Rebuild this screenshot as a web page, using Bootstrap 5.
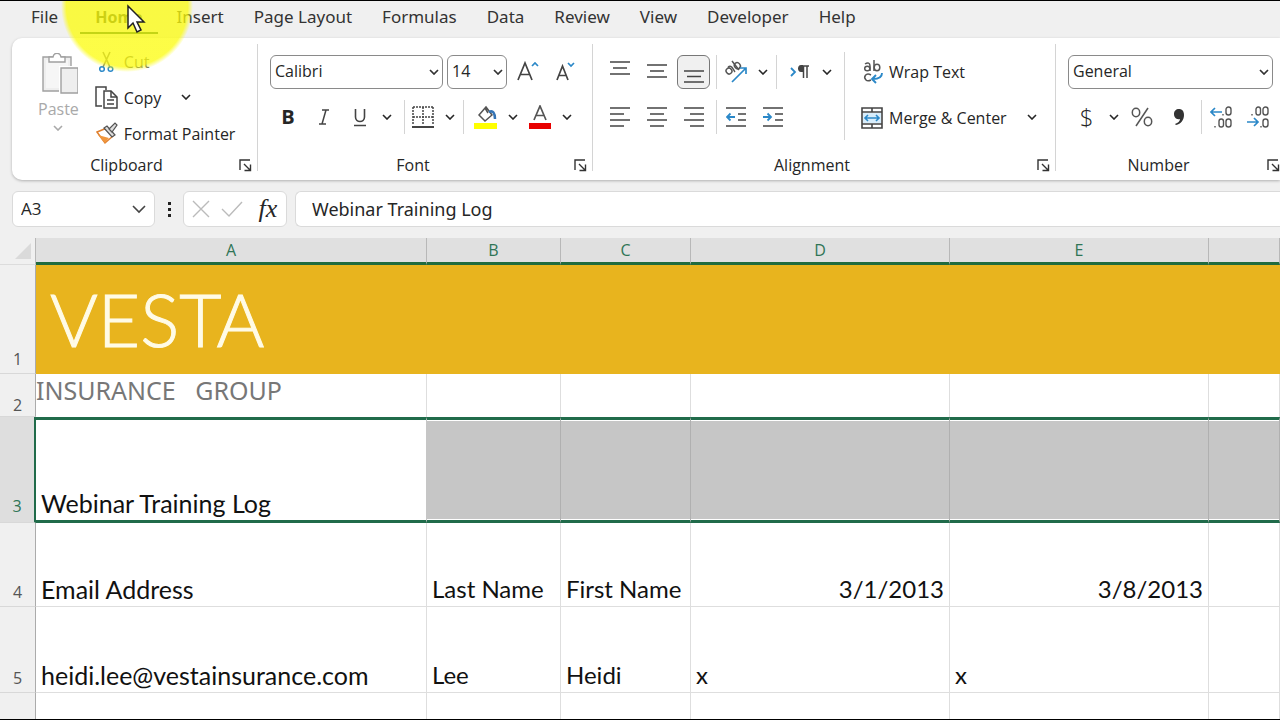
<!DOCTYPE html>
<html lang="en">
<head>
<meta charset="utf-8">
<meta name="viewport" content="width=device-width, initial-scale=1">
<title>Webinar Training Log</title>
<link rel="stylesheet" href="https://cdn.jsdelivr.net/npm/bootstrap@5.3.0/dist/css/bootstrap.min.css">
<style>
  body { background: #f0f0f0; color: #262626; font-family: "Open Sans", "Noto Sans", sans-serif; font-size: 16px; line-height: 24px; }
  button { color: inherit; }
  svg { display: block; flex: none; }
  .app { border-top: 1px solid #000; border-bottom: 1px solid #000; }
  .tabs { height: 37px; padding: 1px 16px 0; font-family: "Noto Sans", sans-serif; }
  .tabs .nav-link { color: #333; padding: 3px 15px 5px; font-size: 17px; line-height: 24px; align-self: flex-start; }
  .tabs .nav-link.active { font-weight: 700; font-size: 16px; margin: 0 4px 0 7px; color: #3a4a30; box-shadow: inset 0 -2px #185c37; }
  .ribbon { height: 142px; margin-left: 12px; background: #fff; border-radius: 10px 0 0 10px; box-shadow: 0 1px 3px #0004; padding-top: 6px; }
  .group { flex: none; height: 127px; border-right: 1px solid #d4d4d4; font-size: 16px; }
  .g-clip { width: 246px; } .g-font { width: 335px; } .g-align { width: 463px; } .g-num { width: 230px; }
  .caption { height: 24px; flex: none; }
  .tools { height: 109px; flex: none; padding: 10px 0 0 12px; row-gap: 10px; }
  .g-clip .tools { padding: 0 0 0 26px; }
  .tool-row { height: 35px; }
  .tb { border: 0; background: none; padding: 0; display: flex; align-items: center; justify-content: center; flex: none; }
  .ic { width: 36px; height: 34px; }
  .g-align .ic, .g-num .ic { width: 37px; }
  .ch { width: 18px; height: 34px; }
  .launch { width: 24px; height: 24px; }
  .g-align .sunk { width: 33px; margin: 0 2px; border: 1px solid #777; border-radius: 6px; background: #f0f0f0; }
  .rule { width: 1px; height: 34px; background: #d4d4d4; flex: none; }
  .rule-tall { height: 88px; margin-top: 8px; }
  .pick { flex: none; height: 34px; border: 1px solid #8a8a8a; border-radius: 6px; padding: 0 16px 2px 4px; color: #262626; font-size: 16px; appearance: none;
    background: #fff url("data:image/svg+xml,%3Csvg xmlns='http://www.w3.org/2000/svg' width='10' height='6'%3E%3Cpath d='M1 1l4 4 4-4' fill='none' stroke='%23333' stroke-width='1.7'/%3E%3C/svg%3E") no-repeat right 3px center; }
  .p-name { width: 173px; } .p-size { width: 60px; } .p-num { width: 205px; }
  .faded { color: #a9a9a9; }
  .cut { color: #666; }
  .paste { padding-top: 9px; }
  .cmd { height: 36px; gap: 6px; }
  .fbar { height: 58px; padding: 0 0 0 12px; }
  .fbox { height: 36px; background: #fff; border: 1px solid #dadada; border-radius: 6px; }
  .namebox { width: 143px; }
  .namebox input, .formula input { border: 0; background: none; outline: 0; color: #262626; min-width: 0; }
  .namebox input { font-size: 17px; }
  .formula input { font-family: "Noto Sans", sans-serif; font-size: 18px; }
  .formula { border-radius: 6px 0 0 6px; border-right: 0; }
  .fx { font-family: "Liberation Serif", serif; font-style: italic; font-size: 26px; line-height: 28px; }
  .sheet { table-layout: fixed; width: 100%; border-collapse: separate; border-spacing: 0; background: #fff; }
  .sheet col.c0 { width: 36px; } .sheet col.c1 { width: 391px; } .sheet col.c2 { width: 134px; } .sheet col.c3 { width: 130px; } .sheet col.c4, .sheet col.c5 { width: 259px; }
  .sheet thead th { height: 27px; background: #e0e0e0; border-right: 1px solid #b8b8b8; border-bottom: 3px solid #206b3e; font-weight: 400; color: #2f7556; text-align: center; vertical-align: middle; padding: 0; }
  .sheet thead th:first-child { background: #f0f0f0; border-bottom: 1px solid #dcdcdc; }
  .sheet tbody th { background: #f0f0f0; border-right: 1px solid #ababab; border-bottom: 1px solid #d8d8d8; font-weight: 400; color: #555; text-align: center; vertical-align: bottom; padding: 0 0 2px; line-height: 24px; }
  .sheet td { border-right: 1px solid #dedede; border-bottom: 1px solid #dedede; color: #111; font-family: Lato, sans-serif; font-size: 24px; line-height: 32px; padding: 0 5px 1px; vertical-align: bottom; white-space: nowrap; }
  .sheet td:nth-child(2) { font-size: 25px; }
  .sheet .h1r { height: 109px; } .sheet .h2r { height: 41px; } .sheet .h3r { height: 106px; } .sheet .h4r { height: 84px; } .sheet .h5r { height: 86px; }
  .sheet td.banner { background: #e8b41e; color: #fffbe6; border: 0; font-weight: 300; font-size: 73px; line-height: 88px; padding: 0 14px 2px; vertical-align: middle; -webkit-text-stroke: 1px #fffbe6; }
  .sheet td.subline { color: #777; font-family: "Noto Sans", sans-serif; padding: 0 0 11px; overflow: visible; }
  .sheet .h2r td { border-bottom: 0; }
  .sheet tbody .h2r th { padding: 0; line-height: 22px; }
  .sheet .picked th { background: #dedede; border-right: 2px solid #206b4a; color: #2f7556; padding-bottom: 4px; }
  .sheet .picked td { border-top: 3px solid #206b4a; border-bottom: 3px solid #206b4a; background: #c6c6c6; border-right-color: #b0b0b0; box-shadow: inset 0 1px #fff, inset 0 -1px #fff; }
  .sheet .picked td:nth-child(2) { background: #fff; border-right-color: #c6c6c6; }
  .halo { position: absolute; left: 61px; top: -61px; width: 132px; height: 132px; border-radius: 50%; background: radial-gradient(closest-side, #fcfc0ac0 92%, #fcfc0a00); pointer-events: none; }
  .pointer { position: absolute; left: 126px; top: 3px; pointer-events: none; }
</style>
</head>
<body>
<svg width="0" height="0" class="position-absolute" aria-hidden="true">
  <symbol id="chev" viewBox="0 0 10 6"><path d="M1 1l4 4 4-4" fill="none" stroke="currentColor" stroke-width="1.6"/></symbol>
  <symbol id="corner" viewBox="0 0 13 13"><path d="M1 11V1h10M5 5l6 6M11.500 5.500v6h-6" fill="none" stroke="#333" stroke-width="1.400"/></symbol>
</svg>
<div class="app vh-100 d-flex flex-column overflow-hidden position-relative">
  <nav class="tabs nav flex-nowrap flex-shrink-0 text-nowrap" aria-label="Ribbon tabs">
    <a class="nav-link" href="#">File</a><a class="nav-link active" href="#">Home</a><a class="nav-link" href="#">Insert</a><a class="nav-link" href="#">Page Layout</a><a class="nav-link" href="#">Formulas</a><a class="nav-link" href="#">Data</a><a class="nav-link" href="#">Review</a><a class="nav-link" href="#">View</a><a class="nav-link" href="#">Developer</a><a class="nav-link" href="#">Help</a>
  </nav>

  <div class="ribbon d-flex flex-shrink-0 overflow-hidden text-nowrap">
    <section class="group g-clip d-flex flex-column">
      <div class="tools d-flex">
        <button class="tb paste flex-column justify-content-start faded me-3">
          <svg width="40" height="44" viewBox="0 0 40 44" fill="#eee" stroke="#a0a0a0" stroke-width="1.400"><path d="M5 4h28v34H5z"/><path d="M8 7h22v28H8z" fill="#f6f6f6" stroke="none"/><path d="M11 9V4h4c1-5 7-5 8 0h4v5z" fill="#fff"/><path d="M21 13h19v30H21z" fill="#fff" stroke="none"/><path d="M24 15h17v25H24z" transform="translate(-1 0)"/></svg>
          <span>Paste</span>
          <svg class="mt-1" width="10" height="6"><use href="#chev"/></svg>
        </button>
        <div class="d-flex flex-column">
          <button class="tb cmd justify-content-start cut">
            <svg width="23" height="24" viewBox="0 0 23 24" fill="none"><path d="M8 2l7 15M15 2L8 17" stroke="#777" stroke-width="1.600"/><circle cx="7" cy="19" r="2.300" stroke="#2b88c8" stroke-width="1.500"/><circle cx="15.500" cy="19" r="2.300" stroke="#2b88c8" stroke-width="1.500"/></svg>Cut</button>
          <div class="d-flex">
            <button class="tb cmd justify-content-start">
              <svg width="23" height="24" viewBox="0 0 23 24" fill="#fff" stroke="#444" stroke-width="1.500"><path d="M7 20H1V1h10v3"/><path d="M9 5h7l6 6v11H9z"/><path d="M16 5v6h6M12 14h7M12 18h7" fill="none"/></svg>Copy</button>
            <button class="tb ch ms-3" aria-label="Copy options"><svg width="10" height="6"><use href="#chev"/></svg></button>
          </div>
          <button class="tb cmd justify-content-start">
            <svg width="23" height="24" viewBox="0 0 23 24"><path d="M2 10l10-4 6 8-8 7z" fill="#fff" stroke="#e08030" stroke-width="1.500"/><path d="M3 13l11 3-4 5z" fill="#f0963c"/><path d="M9 6l3-2 8 9-3 2z" fill="#ddd" stroke="#555" stroke-width="1.200"/><path d="M14 7l6-6 2 2-5 7z" fill="#ddd" stroke="#555" stroke-width="1.200"/></svg>Format Painter</button>
        </div>
      </div>
      <div class="caption d-flex ps-2"><span class="flex-grow-1 text-center">Clipboard</span><button class="tb launch" aria-label="Clipboard settings"><svg width="13" height="13"><use href="#corner"/></svg></button></div>
    </section>

    <section class="group g-font d-flex flex-column">
      <div class="tools d-flex flex-column">
        <div class="tool-row d-flex align-items-center">
          <select class="pick p-name me-1" aria-label="Font"><option>Calibri</option></select>
          <select class="pick p-size" aria-label="Font size"><option>14</option></select>
          <button class="tb ic ms-1" aria-label="Grow font"><svg width="24" height="24" viewBox="0 0 24 24" fill="none" stroke="#444" stroke-width="1.700"><path d="M1 20L8 3l7 17M3.500 14.500h9"/><path d="M15 6l3-3 3 3" stroke="#2b88c8"/></svg></button>
          <button class="tb ic" aria-label="Shrink font"><svg width="24" height="24" viewBox="0 0 24 24" fill="none" stroke="#444" stroke-width="1.700"><path d="M4 20l5.500-14L15 20M6 15.500h7"/><path d="M15 3l3 3 3-3" stroke="#2b88c8"/></svg></button>
        </div>
        <div class="tool-row d-flex align-items-center">
          <button class="tb ic fw-bold fs-5" aria-label="Bold">B</button>
          <button class="tb ic" aria-label="Italic"><svg width="12" height="16" viewBox="0 0 12 16" fill="none" stroke="#444" stroke-width="1.500"><path d="M4 1h7M1 15h7M8 1L4 15"/></svg></button>
          <button class="tb ic" aria-label="Underline"><svg width="14" height="20" viewBox="0 0 14 20" fill="none" stroke="#444" stroke-width="1.600"><path d="M2.500 2v8c0 6 9 6 9 0V2M1 18.500h12"/></svg></button>
          <button class="tb ch" aria-label="Underline options"><svg width="10" height="6"><use href="#chev"/></svg></button>
          <span class="rule ms-2"></span>
          <button class="tb ic" aria-label="Borders"><svg width="22" height="22" viewBox="0 0 22 22" fill="none" stroke="#444" stroke-width="1.500"><path d="M1 1h20M1 11h20M1 1v18M11 1v18M21 1v18" stroke-dasharray="2 1"/><path d="M0 21h22" stroke-width="2"/></svg></button>
          <button class="tb ch" aria-label="Border options"><svg width="10" height="6"><use href="#chev"/></svg></button>
          <span class="rule ms-1"></span>
          <button class="tb ic ms-1" aria-label="Fill colour"><svg width="24" height="24" viewBox="0 0 24 24" fill="none"><path d="M5 10l7-8 6 8-7 6zM11 3l3 5" stroke="#555" stroke-width="1.500"/><path d="M15 7c4-2 6 1 6 7" stroke="#3474b5" stroke-width="2.500"/><path d="M0 18h23v6H0z" fill="#ff0"/></svg></button>
          <button class="tb ch" aria-label="Fill colour options"><svg width="10" height="6"><use href="#chev"/></svg></button>
          <button class="tb ic" aria-label="Font colour"><svg width="24" height="24" viewBox="0 0 24 24" fill="none"><path d="M6 15l6-14 6 14M8 10.500h8" stroke="#555" stroke-width="1.700"/><path d="M1 18h22v6H1z" fill="#e80000"/></svg></button>
          <button class="tb ch" aria-label="Font colour options"><svg width="10" height="6"><use href="#chev"/></svg></button>
        </div>
      </div>
      <div class="caption d-flex"><span class="flex-grow-1 text-center">Font</span><button class="tb launch" aria-label="Font settings"><svg width="13" height="13"><use href="#corner"/></svg></button></div>
    </section>

    <section class="group g-align d-flex flex-column">
      <div class="d-flex">
        <div class="tools d-flex flex-column ps-2">
          <div class="tool-row d-flex align-items-center">
            <button class="tb ic" aria-label="Top align"><svg width="20" height="22" viewBox="0 0 20 22" stroke="#444" stroke-width="1.500"><path d="M0 1h20M3 7h14M0 13h20"/></svg></button>
            <button class="tb ic" aria-label="Middle align"><svg width="20" height="22" viewBox="0 0 20 22" stroke="#444" stroke-width="1.500"><path d="M0 4h20M3 10h14M0 16h20"/></svg></button>
            <button class="tb ic sunk" aria-label="Bottom align"><svg width="20" height="22" viewBox="0 0 20 22" stroke="#444" stroke-width="1.500"><path d="M0 10h20M3 15.500h14M0 21h20"/></svg></button>
            <span class="rule ms-1"></span>
            <button class="tb ic" aria-label="Orientation"><svg width="24" height="24" viewBox="0 0 24 24" fill="none" stroke="#555" stroke-width="1.500"><ellipse cx="5" cy="11" rx="2.800" ry="3" transform="rotate(-40 5 11)"/><path d="M4 7c3-2 4 0 7 5M8 1l7 9"/><ellipse cx="13.500" cy="6" rx="2.800" ry="3.200" transform="rotate(-40 13 6)"/><path d="M8 22L22 8M16 8h6v6" stroke="#2b88c8" stroke-width="1.700"/></svg></button>
            <button class="tb ch me-1" aria-label="Orientation options"><svg width="10" height="6"><use href="#chev"/></svg></button>
            <span class="rule me-1"></span>
            <button class="tb ic" aria-label="Text direction"><svg width="19" height="14" viewBox="0 0 19 14" fill="none"><path d="M1 3l4 4-4 4" stroke="#2b88c8" stroke-width="1.800"/><path d="M12 1h7M13.500 1v12M17 1v12" stroke="#444" stroke-width="1.500"/><path d="M13 0h-2c-4 0-4 7 0 7h2z" fill="#444"/></svg></button>
            <button class="tb ch" aria-label="Text direction options"><svg width="10" height="6"><use href="#chev"/></svg></button>
          </div>
          <div class="tool-row d-flex align-items-center">
            <button class="tb ic" aria-label="Align left"><svg width="20" height="20" viewBox="0 0 20 20" stroke="#444" stroke-width="1.500"><path d="M0 1h20M0 7h14M0 13h20M0 19h14"/></svg></button>
            <button class="tb ic" aria-label="Centre"><svg width="20" height="20" viewBox="0 0 20 20" stroke="#444" stroke-width="1.500"><path d="M0 1h20M3 7h14M0 13h20M3 19h14"/></svg></button>
            <button class="tb ic" aria-label="Align right"><svg width="20" height="20" viewBox="0 0 20 20" stroke="#444" stroke-width="1.500"><path d="M0 1h20M6 7h14M0 13h20M6 19h14"/></svg></button>
            <span class="rule ms-1"></span>
            <button class="tb ic" aria-label="Decrease indent"><svg width="20" height="20" viewBox="0 0 20 20" fill="none" stroke="#444" stroke-width="1.500"><path d="M0 1h20M12 7h8M12 13h8M0 19h20"/><path d="M9 10H1M4.500 6.500L1 10l3.500 3.500" stroke="#2b88c8" stroke-width="1.800"/></svg></button>
            <button class="tb ic" aria-label="Increase indent"><svg width="20" height="20" viewBox="0 0 20 20" fill="none" stroke="#444" stroke-width="1.500"><path d="M0 1h20M12 7h8M12 13h8M0 19h20"/><path d="M0 10h8M4.500 6.500L8 10l-3.500 3.500" stroke="#2b88c8" stroke-width="1.800"/></svg></button>
          </div>
        </div>
        <span class="rule rule-tall ms-2 me-3"></span>
        <div class="tools d-flex flex-column px-0">
          <button class="tb cmd justify-content-start">
            <svg width="22" height="24" viewBox="0 0 22 24" fill="none" stroke="#555" stroke-width="1.500"><path d="M4 4c3-2 5-1 5 2v5"/><ellipse cx="6.300" cy="8.500" rx="2.600" ry="2.300"/><path d="M13 0v11"/><ellipse cx="16" cy="7.500" rx="2.800" ry="3.200"/><path d="M10 15c-5-3-8 2-5 5 1 1 3 1 5 0"/><path d="M21 13c0 5-4 6-9 6M15 15l-4 4 4 4" stroke="#2b88c8" stroke-width="1.900"/></svg>Wrap Text</button>
          <div class="d-flex">
            <button class="tb cmd justify-content-start">
              <svg width="22" height="22" viewBox="0 0 22 22" fill="none" stroke="#444" stroke-width="1.600"><path d="M1 1h20v20H1zM1 5h20M1 17h20M11 1v4M11 17v4"/><path d="M2 6h18v10H2z" fill="#d8edfb" stroke="none"/><path d="M4 11h14M7 8l-3 3 3 3M15 8l3 3-3 3" stroke="#2b88c8"/></svg>Merge &amp; Center</button>
            <button class="tb ch ms-3" aria-label="Merge options"><svg width="10" height="6"><use href="#chev"/></svg></button>
          </div>
        </div>
      </div>
      <div class="caption d-flex"><span class="flex-grow-1 text-center">Alignment</span><button class="tb launch" aria-label="Alignment settings"><svg width="13" height="13"><use href="#corner"/></svg></button></div>
    </section>

    <section class="group g-num d-flex flex-column">
      <div class="tools d-flex flex-column">
        <div class="tool-row d-flex align-items-center"><select class="pick p-num" aria-label="Number format"><option>General</option></select></div>
        <div class="tool-row d-flex align-items-center">
          <button class="tb ic fs-4 fw-light" aria-label="Currency">$</button>
          <button class="tb ch" aria-label="Currency options"><svg width="10" height="6"><use href="#chev"/></svg></button>
          <button class="tb ic" aria-label="Percent"><svg width="22" height="20" viewBox="0 0 22 20" fill="none" stroke="#555" stroke-width="1.500"><ellipse cx="5" cy="5.500" rx="3.700" ry="4.200"/><ellipse cx="17" cy="14.500" rx="3.700" ry="4.200"/><path d="M17 1L5 19"/></svg></button>
          <button class="tb ic" aria-label="Comma style"><svg width="12" height="18" viewBox="0 0 12 18"><path d="M6 1c3 0 5 2 5 6 0 5-3 9-8 10l-1-1c3-1 5-3 5-5-4 1-6-2-6-5s2-5 5-5z" fill="#333"/></svg></button>
          <span class="rule ms-1"></span>
          <button class="tb ic" aria-label="Increase decimal"><svg width="22" height="22" viewBox="0 0 22 22" fill="none" stroke="#555" stroke-width="1.400"><rect x="16" y="1" width="5" height="8" rx="2.500"/><rect x="9" y="13" width="4.500" height="8" rx="2.200"/><rect x="16" y="13" width="5" height="8" rx="2.500"/><path d="M5 20v1.500M13 8v1.500"/><path d="M12 6H1M5 2L1 6l4 4" stroke="#2b88c8" stroke-width="1.700"/></svg></button>
          <button class="tb ic" aria-label="Decrease decimal"><svg width="22" height="22" viewBox="0 0 22 22" fill="none" stroke="#555" stroke-width="1.400"><rect x="9" y="1" width="4.500" height="8" rx="2.200"/><rect x="16" y="1" width="5" height="8" rx="2.500"/><rect x="16" y="13" width="5" height="8" rx="2.500"/><path d="M5 8v1.500M14 20v1.500"/><path d="M0 16h11M7 12l4 4-4 4" stroke="#2b88c8" stroke-width="1.700"/></svg></button>
        </div>
      </div>
      <div class="caption d-flex"><span class="flex-grow-1 text-center">Number</span><button class="tb launch" aria-label="Number settings"><svg width="13" height="13"><use href="#corner"/></svg></button></div>
    </section>
  </div>

  <div class="fbar d-flex align-items-center flex-shrink-0">
    <div class="fbox namebox d-flex align-items-center px-2">
      <input class="flex-grow-1 p-0" type="text" value="A3" aria-label="Name box">
      <svg width="14" height="9" viewBox="0 0 14 9" fill="none" stroke="#444" stroke-width="1.600"><path d="M1 1l6 6 6-6"/></svg>
    </div>
    <svg class="mx-2" width="12" height="16" viewBox="0 0 12 16" fill="#222"><path d="M5 1h3v3H5zM5 7h3v3H5zM5 13h3v3H5z"/></svg>
    <div class="fbox d-flex align-items-center">
      <button class="tb ch ms-2" aria-label="Cancel"><svg width="18" height="18" viewBox="0 0 18 18" stroke="#bbb" stroke-width="1.400"><path d="M1 1l16 16M17 1L1 17"/></svg></button>
      <button class="tb ic ms-1" aria-label="Enter"><svg width="22" height="16" viewBox="0 0 22 16" fill="none" stroke="#bbb" stroke-width="1.400"><path d="M1 8l7 7L21 1"/></svg></button>
      <button class="tb ic fx" aria-label="Insert function">fx</button>
    </div>
    <div class="fbox formula flex-grow-1 d-flex ms-2 ps-3"><input class="flex-grow-1 p-0" type="text" value="Webinar Training Log" aria-label="Formula bar"></div>
  </div>

  <table class="sheet flex-shrink-0">
    <colgroup><col class="c0"><col class="c1"><col class="c2"><col class="c3"><col class="c4"><col class="c5"><col></colgroup>
    <thead><tr><th aria-label="Select all"><svg class="ms-auto me-1" width="16" height="16"><path d="M16 0v16H0z" fill="#dadada"/></svg></th><th>A</th><th>B</th><th>C</th><th>D</th><th>E</th><th></th></tr></thead>
    <tbody>
      <tr class="h1r"><th>1</th><td class="banner" colspan="6">VESTA</td></tr>
      <tr class="h2r"><th>2</th><td class="subline">INSURANCE&nbsp;&nbsp; GROUP</td><td></td><td></td><td></td><td></td><td></td></tr>
      <tr class="h3r picked"><th>3</th><td>Webinar Training Log</td><td></td><td></td><td></td><td></td><td></td></tr>
      <tr class="h4r"><th>4</th><td>Email Address</td><td>Last Name</td><td>First Name</td><td class="text-end">3/1/2013</td><td class="text-end">3/8/2013</td><td></td></tr>
      <tr class="h5r"><th>5</th><td>heidi.lee@vestainsurance.com</td><td>Lee</td><td>Heidi</td><td>x</td><td>x</td><td></td></tr>
      <tr class="h5r"><th></th><td></td><td></td><td></td><td></td><td></td><td></td></tr>
    </tbody>
  </table>

  <div class="halo"></div>
  <svg class="pointer" width="20" height="30" viewBox="0 0 20 30"><path d="M2 2v22l5-5 4 9 4-2-4-8h7z" fill="#fff" stroke="#222" stroke-width="1.500"/></svg>
</div>
<script src="https://cdn.jsdelivr.net/npm/bootstrap@5.3.0/dist/js/bootstrap.bundle.min.js"></script>
</body>
</html>
